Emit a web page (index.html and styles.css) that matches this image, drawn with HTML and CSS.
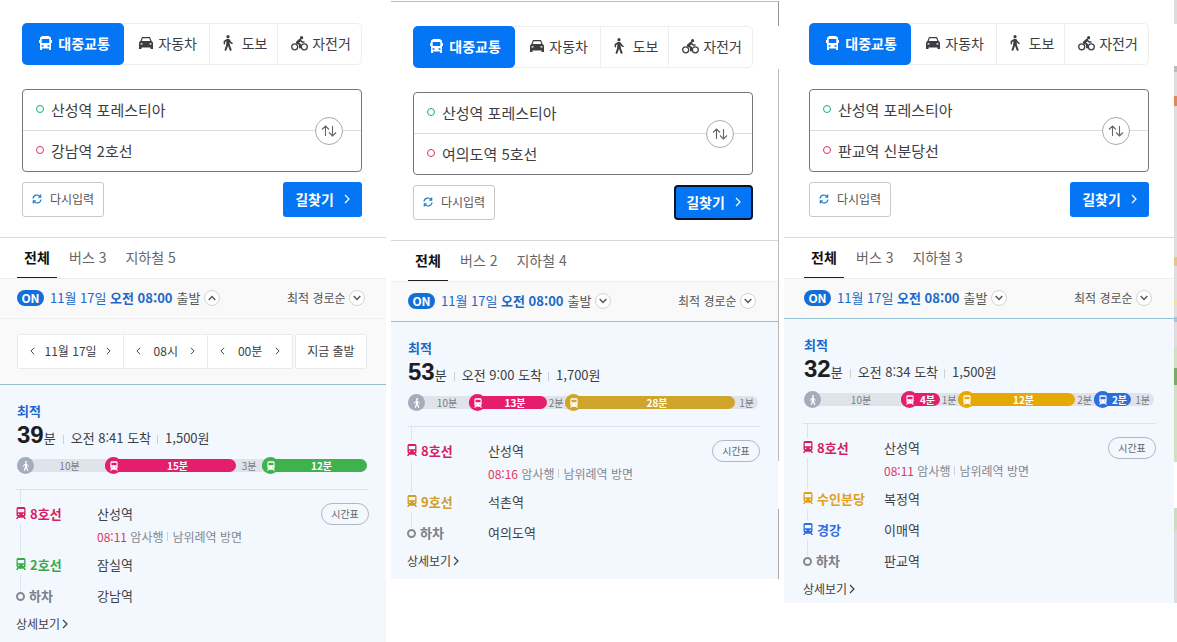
FILE: index.html
```
<!DOCTYPE html>
<html lang="ko">
<head>
<meta charset="utf-8">
<meta name="viewport" content="width=device-width, initial-scale=1">
<title>길찾기</title>
<link rel="stylesheet" href="styles.css">
</head>
<body>
<svg class="sprite" aria-hidden="true">
  <symbol id="bus" viewBox="0 0 13 14"><path fill="currentColor" fill-rule="evenodd" d="M2.500 0h8v1.200H12V4h1v3h-1v7h-2v-1.500H3V14H1V7H0V4h1V1.200h1.500zM2.700 3v4h7.600V3zM2.500 9.300v1.400h2V9.300zM8.500 9.300v1.400h2V9.300z"/></symbol>
  <symbol id="car" viewBox="0 0 14 12"><path fill="currentColor" fill-rule="evenodd" d="M3 0h8l1.600 4L14 5.500V12h-2.500v-1.500h-9V12H0V5.500L1.400 4zM3.700 1.300L2.700 4h8.600l-1-2.700zM1.500 6.200v1.300h2V6.200zM10.500 6.200v1.300h2V6.200z"/></symbol>
  <symbol id="walk" viewBox="0 0 10 16"><g fill="none" stroke="currentColor" stroke-linecap="round" stroke-linejoin="round"><circle cx="5" cy="1.700" r="1.600" fill="currentColor" stroke="none"/><path stroke-width="3.400" d="M5 5.600v3.600"/><path stroke-width="2" d="M4.400 9.500L2.600 14.800M5.600 9.500L7.600 14.800"/><path stroke-width="1.500" d="M4.300 4.600L1.400 6.500v2.300M5.800 4.800l1.800 2.500 1.400 1"/></g></symbol>
  <symbol id="bike" viewBox="0 0 17 15"><g fill="none" stroke="currentColor" stroke-linecap="round" stroke-linejoin="round"><circle cx="3.700" cy="10.800" r="3" stroke-width="1.300"/><circle cx="13.300" cy="10.800" r="3" stroke-width="1.300"/><circle cx="10.600" cy="1.700" r="1.600" fill="currentColor" stroke="none"/><path stroke-width="2.600" d="M9 4L6.200 6.500"/><path stroke-width="2" d="M6.200 6.500l2.800 2v3"/><path stroke-width="1.400" d="M9 4l2 2h2"/></g></symbol>
  <symbol id="swap" viewBox="0 0 16 14"><path fill="none" stroke="currentColor" stroke-width="1.100" d="M4.500 12V2M1 5.500L4.500 2 8 5.500M11.500 2v10M8 8.500l3.500 3.500L15 8.500"/></symbol>
  <symbol id="reset" viewBox="0 0 10 10"><g fill="none" stroke="currentColor" stroke-width="1.200"><path d="M1 4.500A4 4 0 0 1 8.300 2.800M9 5.500A4 4 0 0 1 1.700 7.200"/><path d="M8.700.6v2.500H6.300M1.300 9.400V6.900h2.400"/></g></symbol>
  <symbol id="right" viewBox="0 0 6 10"><path fill="none" stroke="currentColor" stroke-width="1.200" d="M1 1l4 4-4 4"/></symbol>
  <symbol id="left" viewBox="0 0 6 10"><path fill="none" stroke="currentColor" stroke-width="1.200" d="M5 1L1 5l4 4"/></symbol>
  <symbol id="down" viewBox="0 0 8 6"><path fill="none" stroke="currentColor" stroke-width="1.400" d="M.7 1L4 4.500 7.300 1"/></symbol>
  <symbol id="up" viewBox="0 0 8 6"><path fill="none" stroke="currentColor" stroke-width="1.400" d="M.7 5L4 1.500 7.300 5"/></symbol>
  <symbol id="train" viewBox="0 0 10 12"><path fill="currentColor" fill-rule="evenodd" d="M1.500 0h7l1 1.200v7.300l-1 .8L10 12H8.400l-.6-1.200H2.200L1.600 12H0l1.500-2.700-1-.8V1.200zM1.800 2v3.200h6.400V2zM2 6.800v1.200h1.300V6.800zM6.700 6.800v1.200H8V6.800z"/></symbol>
</svg>
<main class="board">

<section class="panel panel-gangnam">
 <div class="content">
  <form class="search">
    <div class="modes">
      <button type="button" class="mode transit on"><svg class="i-bus"><use href="#bus"/></svg>대중교통</button>
      <button type="button" class="mode auto"><svg class="i-car"><use href="#car"/></svg>자동차</button>
      <button type="button" class="mode foot"><svg class="i-walk"><use href="#walk"/></svg>도보</button>
      <button type="button" class="mode cycle"><svg class="i-bike"><use href="#bike"/></svg>자전거</button>
    </div>
    <div class="points">
      <label class="point start"><span class="ring"></span><input type="text" aria-label="출발지" value="산성역 포레스티아"></label>
      <label class="point goal"><span class="ring"></span><input type="text" aria-label="도착지" value="강남역 2호선"></label>
      <button type="button" class="swap" aria-label="출발지 도착지 바꾸기"><svg><use href="#swap"/></svg></button>
    </div>
    <div class="actions">
      <button type="reset" class="reset"><svg><use href="#reset"/></svg>다시입력</button>
      <button type="button" class="find">길찾기<svg><use href="#right"/></svg></button>
    </div>
  </form>
  <nav class="tabs"><a class="tab on" href="#all1">전체</a><a class="tab" href="#b1">버스 3</a><a class="tab" href="#s1">지하철 5</a></nav>
  <div class="options">
    <button type="button" class="depart"><span class="pill">ON</span><span class="when">11월 17일 <b>오전 08:00</b></span><span class="word">출발</span><span class="round"><svg><use href="#up"/></svg></span></button>
    <label class="sort"><select aria-label="정렬"><option>최적 경로순</option></select><span class="round"><svg><use href="#down"/></svg></span></label>
  </div>
  <div class="picker">
    <div class="steps">
      <div class="step date"><button type="button" aria-label="이전 날짜"><svg><use href="#left"/></svg></button><span>11월 17일</span><button type="button" aria-label="다음 날짜"><svg><use href="#right"/></svg></button></div>
      <div class="step"><button type="button" aria-label="이전 시"><svg><use href="#left"/></svg></button><span>08시</span><button type="button" aria-label="다음 시"><svg><use href="#right"/></svg></button></div>
      <div class="step"><button type="button" aria-label="이전 분"><svg><use href="#left"/></svg></button><span>00분</span><button type="button" aria-label="다음 분"><svg><use href="#right"/></svg></button></div>
    </div>
    <button type="button" class="now">지금 출발</button>
  </div>
  <article class="result" id="all1">
    <div class="summary">
      <strong class="best">최적</strong>
      <p class="facts"><span class="total"><b>39</b>분</span><span class="fact">오전 8:41 도착</span><span class="fact">1,500원</span></p>
      <div class="track">
        <span class="leg walk" style="flex-grow:88"><i class="dot"><svg><use href="#walk"/></svg></i><span>10분</span></span>
        <span class="leg ride line8" style="flex-grow:131"><i class="dot"><svg><use href="#train"/></svg></i><span>15분</span></span>
        <span class="leg" style="flex-grow:26"><span>3분</span></span>
        <span class="leg ride line2" style="flex-grow:105"><i class="dot"><svg><use href="#train"/></svg></i><span>12분</span></span>
      </div>
    </div>
    <ol class="stops">
      <li class="stop"><span class="line t8"><svg><use href="#train"/></svg>8호선</span><div class="place"><span>산성역</span><p class="next"><em>08:11</em> 암사행<span class="dir">남위례역 방면</span></p></div><button type="button" class="table">시간표</button></li>
      <li class="stop"><span class="line t2"><svg><use href="#train"/></svg>2호선</span><span class="place">잠실역</span></li>
      <li class="stop"><span class="line off"><i class="end"></i>하차</span><span class="place">강남역</span></li>
    </ol>
    <a class="more" href="#d1">상세보기<svg><use href="#right"/></svg></a>
  </article>
 </div>
</section>

<section class="panel panel-yeouido">
 <div class="content">
  <form class="search">
    <div class="modes">
      <button type="button" class="mode transit on"><svg class="i-bus"><use href="#bus"/></svg>대중교통</button>
      <button type="button" class="mode auto"><svg class="i-car"><use href="#car"/></svg>자동차</button>
      <button type="button" class="mode foot"><svg class="i-walk"><use href="#walk"/></svg>도보</button>
      <button type="button" class="mode cycle"><svg class="i-bike"><use href="#bike"/></svg>자전거</button>
    </div>
    <div class="points">
      <label class="point start"><span class="ring"></span><input type="text" aria-label="출발지" value="산성역 포레스티아"></label>
      <label class="point goal"><span class="ring"></span><input type="text" aria-label="도착지" value="여의도역 5호선"></label>
      <button type="button" class="swap" aria-label="출발지 도착지 바꾸기"><svg><use href="#swap"/></svg></button>
    </div>
    <div class="actions">
      <button type="reset" class="reset"><svg><use href="#reset"/></svg>다시입력</button>
      <button type="button" class="find focused">길찾기<svg><use href="#right"/></svg></button>
    </div>
  </form>
  <nav class="tabs"><a class="tab on" href="#all2">전체</a><a class="tab" href="#b2">버스 2</a><a class="tab" href="#s2">지하철 4</a></nav>
  <div class="options last">
    <button type="button" class="depart"><span class="pill">ON</span><span class="when">11월 17일 <b>오전 08:00</b></span><span class="word">출발</span><span class="round"><svg><use href="#down"/></svg></span></button>
    <label class="sort"><select aria-label="정렬"><option>최적 경로순</option></select><span class="round"><svg><use href="#down"/></svg></span></label>
  </div>
  <article class="result" id="all2">
    <div class="summary">
      <strong class="best">최적</strong>
      <p class="facts"><span class="total"><b>53</b>분</span><span class="fact">오전 9:00 도착</span><span class="fact">1,700원</span></p>
      <div class="track">
        <span class="leg walk" style="flex-grow:61"><i class="dot"><svg><use href="#walk"/></svg></i><span>10분</span></span>
        <span class="leg ride line8" style="flex-grow:78"><i class="dot"><svg><use href="#train"/></svg></i><span>13분</span></span>
        <span class="leg" style="flex-grow:18"><span>2분</span></span>
        <span class="leg ride line9" style="flex-grow:170"><i class="dot"><svg><use href="#train"/></svg></i><span>28분</span></span>
        <span class="leg" style="flex-grow:23"><span>1분</span></span>
      </div>
    </div>
    <ol class="stops">
      <li class="stop"><span class="line t8"><svg><use href="#train"/></svg>8호선</span><div class="place"><span>산성역</span><p class="next"><em>08:16</em> 암사행<span class="dir">남위례역 방면</span></p></div><button type="button" class="table">시간표</button></li>
      <li class="stop"><span class="line t9"><svg><use href="#train"/></svg>9호선</span><span class="place">석촌역</span></li>
      <li class="stop"><span class="line off"><i class="end"></i>하차</span><span class="place">여의도역</span></li>
    </ol>
    <a class="more" href="#d2">상세보기<svg><use href="#right"/></svg></a>
  </article>
 </div>
 <div class="edge thin" aria-hidden="true"></div>
</section>

<section class="panel panel-pangyo">
 <div class="content">
  <form class="search">
    <div class="modes">
      <button type="button" class="mode transit on"><svg class="i-bus"><use href="#bus"/></svg>대중교통</button>
      <button type="button" class="mode auto"><svg class="i-car"><use href="#car"/></svg>자동차</button>
      <button type="button" class="mode foot"><svg class="i-walk"><use href="#walk"/></svg>도보</button>
      <button type="button" class="mode cycle"><svg class="i-bike"><use href="#bike"/></svg>자전거</button>
    </div>
    <div class="points">
      <label class="point start"><span class="ring"></span><input type="text" aria-label="출발지" value="산성역 포레스티아"></label>
      <label class="point goal"><span class="ring"></span><input type="text" aria-label="도착지" value="판교역 신분당선"></label>
      <button type="button" class="swap" aria-label="출발지 도착지 바꾸기"><svg><use href="#swap"/></svg></button>
    </div>
    <div class="actions">
      <button type="reset" class="reset"><svg><use href="#reset"/></svg>다시입력</button>
      <button type="button" class="find">길찾기<svg><use href="#right"/></svg></button>
    </div>
  </form>
  <nav class="tabs"><a class="tab on" href="#all3">전체</a><a class="tab" href="#b3">버스 3</a><a class="tab" href="#s3">지하철 3</a></nav>
  <div class="options last">
    <button type="button" class="depart"><span class="pill">ON</span><span class="when">11월 17일 <b>오전 08:00</b></span><span class="word">출발</span><span class="round"><svg><use href="#down"/></svg></span></button>
    <label class="sort"><select aria-label="정렬"><option>최적 경로순</option></select><span class="round"><svg><use href="#down"/></svg></span></label>
  </div>
  <article class="result" id="all3">
    <div class="summary">
      <strong class="best">최적</strong>
      <p class="facts"><span class="total"><b>32</b>분</span><span class="fact">오전 8:34 도착</span><span class="fact">1,500원</span></p>
      <div class="track">
        <span class="leg walk" style="flex-grow:97"><i class="dot"><svg><use href="#walk"/></svg></i><span>10분</span></span>
        <span class="leg ride line8" style="flex-grow:39"><i class="dot"><svg><use href="#train"/></svg></i><span>4분</span></span>
        <span class="leg" style="flex-grow:18"><span>1분</span></span>
        <span class="leg ride suin" style="flex-grow:117"><i class="dot"><svg><use href="#train"/></svg></i><span>12분</span></span>
        <span class="leg" style="flex-grow:19"><span>2분</span></span>
        <span class="leg ride gyeong" style="flex-grow:37"><i class="dot"><svg><use href="#train"/></svg></i><span>2분</span></span>
        <span class="leg" style="flex-grow:23"><span>1분</span></span>
      </div>
    </div>
    <ol class="stops">
      <li class="stop"><span class="line t8"><svg><use href="#train"/></svg>8호선</span><div class="place"><span>산성역</span><p class="next"><em>08:11</em> 암사행<span class="dir">남위례역 방면</span></p></div><button type="button" class="table">시간표</button></li>
      <li class="stop"><span class="line tsuin"><svg><use href="#train"/></svg>수인분당</span><span class="place">복정역</span></li>
      <li class="stop"><span class="line tgyeong"><svg><use href="#train"/></svg>경강</span><span class="place">이매역</span></li>
      <li class="stop"><span class="line off"><i class="end"></i>하차</span><span class="place">판교역</span></li>
    </ol>
    <a class="more" href="#d3">상세보기<svg><use href="#right"/></svg></a>
  </article>
 </div>
 <div class="edge map" aria-hidden="true"></div>
</section>

</main>
</body>
</html>
```
FILE: styles.css
```
* { box-sizing: border-box; }
body {
  margin: 0;
  background: #fff;
  color: #3c3e43;
  font: 13px/20px "Noto Sans CJK KR", sans-serif;
}
button, input, select { font: inherit; color: inherit; margin: 0; }
button { padding: 0; background: none; border: 0; cursor: pointer; }
a { color: inherit; text-decoration: none; }
p, ol { margin: 0; padding: 0; list-style: none; }
svg { flex: none; display: block; }
.sprite { display: none; }

.board {
  display: grid;
  grid-template-columns: 386fr 388fr 393fr;
  column-gap: 5px;
  align-items: start;
}
.panel { display: flex; --inset: 0px; --right: 25px; }
.panel-gangnam { --right: 24px; min-height: 100vh; }
.panel-yeouido { margin-top: 1px; }
.panel-yeouido .content { border-top: 1px solid #bbb; padding-top: 1px; }
.panel-pangyo { --inset: 3px; }
.content { flex: 1; min-width: 0; display: flex; flex-direction: column; }

.search { padding: 23px var(--right) 20px calc(22px + var(--inset)); }
.modes { display: flex; height: 42px; border: 1px solid #eee; border-radius: 5px; }
.mode {
  flex: 86 1 0;
  display: flex;
  align-items: center;
  justify-content: center;
  gap: 5px;
  padding: 0 0 2px 3px;
  font-size: 14px;
  white-space: nowrap;
}
.mode + .mode { border-left: 1px solid #eee; }
.mode.transit { flex-grow: 104; gap: 6px; margin: -1px 0 -1px -1px; border-radius: 5px; background: #0475f4; color: #fff; font-weight: 700; }
.mode.transit + .mode { border-left: 0; }
.mode.foot { flex-grow: 67; gap: 9px; }
.mode.cycle { flex-grow: 84; gap: 4px; }
.i-bus { width: 13px; height: 14px; }
.i-car { width: 14px; height: 12px; }
.i-walk { width: 10px; height: 16px; }
.i-bike { width: 17px; height: 15px; }

.points { position: relative; margin-top: 24px; border: 1px solid #76767b; border-radius: 4px; }
.point { display: flex; align-items: center; gap: 7px; height: 40px; padding: 0 0 2px 13px; font-size: 15px; }
.point.goal { height: 41px; border-top: 1px solid #ddd; }
.point input { flex: 1; min-width: 0; height: 30px; padding: 0; border: 0; outline: 0; background: none; }
.ring { width: 8px; height: 8px; border: 1px solid #d7375a; border-radius: 50%; }
.start .ring { border-color: #12b368; }
.swap {
  position: absolute;
  right: 18px;
  top: 27px;
  width: 28px;
  height: 28px;
  display: grid;
  place-items: center;
  border: 1px solid #aaa;
  border-radius: 50%;
  background: #fff;
  color: #666;
}
.swap svg { width: 16px; height: 14px; }
.actions { display: flex; justify-content: space-between; margin-top: 10px; }
.reset { display: flex; align-items: center; justify-content: center; gap: 8px; width: 82px; height: 35px; padding-bottom: 2px; border: 1px solid #c8c8c8; border-radius: 3px; font-size: 12px; color: #555; }
.reset svg { width: 10px; height: 10px; color: #1a7fd0; }
.find { display: flex; align-items: center; justify-content: center; gap: 10px; width: 79px; height: 35px; padding-bottom: 1px; border-radius: 3px; background: #0475f4; color: #fff; font-size: 14px; font-weight: 700; }
.find svg { width: 6px; height: 10px; }
.find.focused { border: 2px solid #04142c; border-radius: 4px; }

.tabs { display: flex; gap: 19px; height: 42px; padding-left: calc(17px + var(--inset)); border-top: 1px solid #d8d8d8; border-bottom: 1px solid #eee; font-size: 14px; line-height: 39px; color: #666; }
.tab.on { width: 40px; margin-right: -7px; text-align: center; color: #111; font-weight: 700; box-shadow: inset 0 -1px #222; }

.options { display: flex; justify-content: space-between; align-items: center; height: 40px; padding: 0 calc(var(--right) - 3px) 2px calc(17px + var(--inset)); border-bottom: 1px solid #eee; background: #f9f9f9; white-space: nowrap; }
.options.last, .picker { border-bottom: 1px solid #95bed3; }
.depart { display: flex; align-items: center; gap: 4px; color: #555; }
.pill { width: 27px; height: 16px; margin-right: 2px; border-radius: 8px; background: #136fd8; color: #fff; font-size: 12px; font-weight: 700; line-height: 16px; }
.when { color: #2068c8; }
.round { display: grid; place-items: center; width: 16px; height: 16px; border: 1px solid #d4d4d4; border-radius: 50%; background: #fff; color: #555; }
.round svg { width: 8px; height: 6px; }
.sort { display: flex; align-items: center; gap: 4px; font-size: 12px; color: #555; }
.sort select { appearance: none; padding: 0; border: 0; background: none; }

.picker { display: flex; gap: 2px; padding: 15px 19px 15px 17px; background: #f9f9f9; font-size: 12px; }
.steps { flex: 277 1 0; display: flex; border: 1px solid #eaeaea; border-radius: 2px; background: #fff; }
.step { flex: 62 1 0; display: flex; align-items: center; justify-content: space-between; height: 33px; padding: 0 11px 2px; }
.step.date { flex-grow: 84; }
.step + .step { border-left: 1px solid #eaeaea; }
.step button { padding: 4px 1px; }
.step svg { width: 5px; height: 8px; }
.now { flex: 71 1 0; padding-bottom: 2px; border: 1px solid #eaeaea; border-radius: 2px; background: #fff; white-space: nowrap; }

.result { flex: 1; padding: 16px calc(var(--right) - 7px) 8px calc(16px + var(--inset)); background: #f3f8fe; }
.summary { padding: 0 2px 0 1px; }
.best { display: block; color: #1a68cc; }
.facts { display: flex; align-items: baseline; height: 28px; line-height: 28px; white-space: nowrap; }
.total { margin-right: 1px; }
.total b { font: 700 24px/28px "Liberation Sans", sans-serif; color: #1c1e22; }
.fact { position: relative; margin-left: 14px; }
.fact::before { content: ""; position: absolute; left: -8px; top: 11px; width: 1px; height: 9px; background: #ccd1d8; }
.track { display: flex; height: 13px; margin: 10px 0 17px; border-radius: 7px; background: #e0e4ea; font-size: 10px; color: #777c85; }
.leg { flex: 1 1 0; min-width: 0; display: flex; align-items: center; height: 13px; border-radius: 7px; line-height: 13px; white-space: nowrap; }
.leg span { flex: 1; text-align: center; }
.dot { display: grid; place-items: center; flex: none; width: 17px; height: 17px; border-radius: 50%; background: inherit; color: #fff; }
.walk .dot { background: #a3adbd; }
.dot svg { width: 8px; height: 10px; }
.ride { color: #fff; font-weight: 700; }
.ride span { margin-right: 3px; }
.line8 { background: #e41e6c; }
.line2 { background: #3eb24c; }
.line9 { background: #cfa52c; }
.suin { background: #e6a802; }
.gyeong { background: #2b6edc; }

.stops { position: relative; display: grid; row-gap: 9px; padding-top: 13px; border-top: 1px solid #dde3ea; }
.stops::before { content: ""; position: absolute; left: 4px; top: 0; bottom: 16px; width: 1px; background: #dde3ea; }
.stop { position: relative; display: grid; grid-template-columns: 81px 1fr auto; align-items: start; line-height: 22px; }
.line { display: flex; align-items: center; gap: 4px; font-weight: 700; }
.line svg { width: 10px; height: 20px; padding: 3px 0 5px; background: #f3f8fe; }
.t8 { color: #d61e63; }
.t2 { color: #35ab48; }
.t9 { color: #cf9d28; }
.tsuin { color: #e3a01c; }
.tgyeong { color: #2b6edc; }
.off { color: #7c8087; }
.end { width: 9px; height: 9px; border: 2px solid #868a90; border-radius: 50%; background: #f3f8fe; }
.next { margin-top: 4px; font-size: 12px; line-height: 16px; color: #83878e; white-space: nowrap; }
.next em { font-style: normal; color: #dc3a5c; }
.dir { margin-left: 4px; padding-left: 5px; background: linear-gradient(#ccd1d8, #ccd1d8) left center / 1px 9px no-repeat; }
.table { width: 48px; height: 22px; border: 1px solid #b0b7c0; border-radius: 11px; font-size: 10px; line-height: 20px; color: #666; }
.more { display: inline-flex; align-items: center; gap: 2px; margin-top: 8px; font-size: 12px; line-height: 18px; }
.more svg { width: 6px; height: 10px; }
.panel-pangyo .result { padding-bottom: 4px; }

.edge.thin { width: 1px; background: linear-gradient(#999 25px, #fff 25px 68px, #bbb 68px 460px, #fff 460px 508px, #aaa 508px); }
.edge.map {
  width: 3px;
  background: linear-gradient(#ddd 24px, #fff 24px 66px, #bbb 66px 72px, #dedede 72px 96px, #e2855c 96px 106px, #dedede 106px 257px, #e6c483 257px 266px, #dedede 266px 300px, #efe2a0 300px 306px, #dedede 306px 317px, #a9c3da 317px 322px, #dedede 322px 347px, #cfe0c3 347px 368px, #7ba968 368px 385px, #cfe0c3 385px 462px, #fff 462px 508px, #cbdcc0 508px 530px, #dcdcdc 530px);
}
```
